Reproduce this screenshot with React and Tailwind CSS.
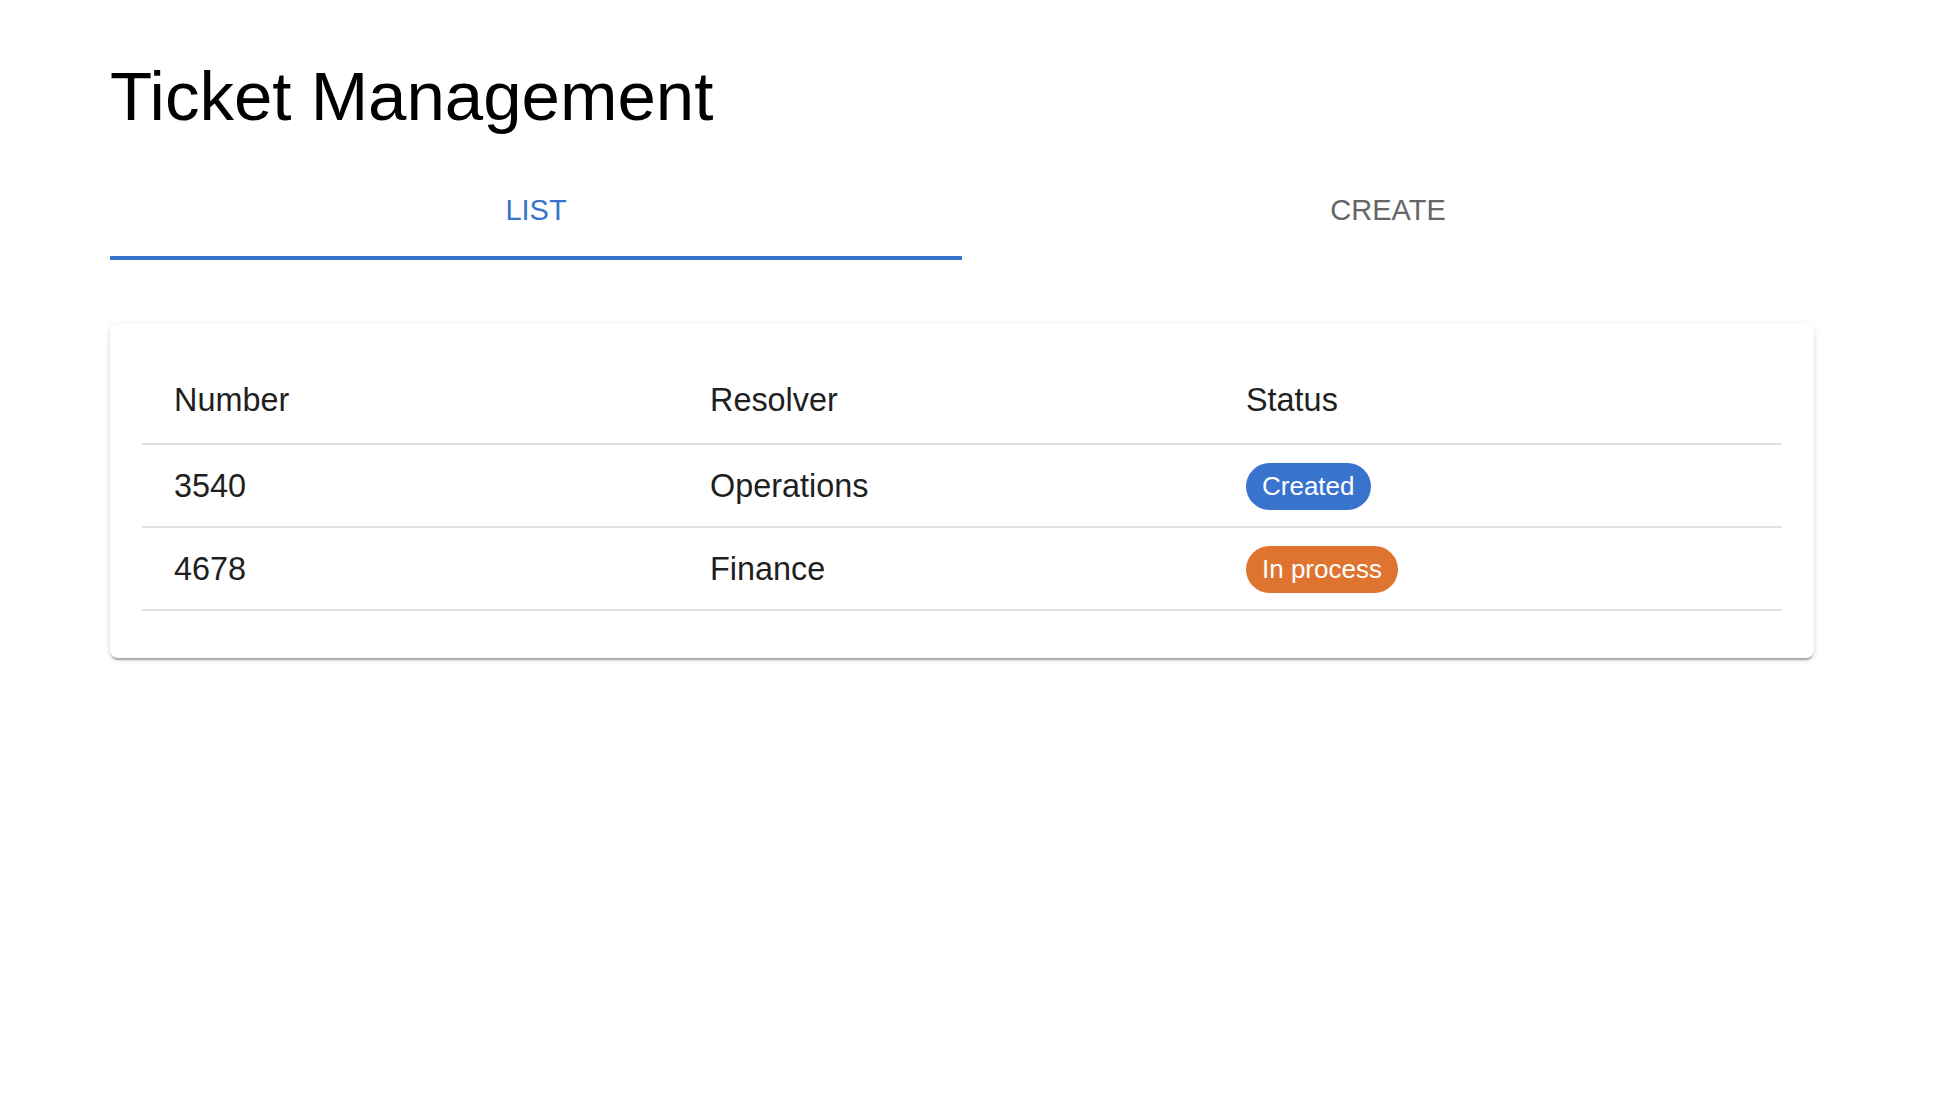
import React from "react";

const tickets = [
  { number: "3540", resolver: "Operations", status: "Created" },
  { number: "4678", resolver: "Finance", status: "In process" },
];

function StatusChip({ status }) {
  const color = status === "Created" ? "bg-[#3874cd]" : "bg-[#de7430]";
  return (
    <span className={`inline-flex h-[47px] items-center rounded-full px-4 text-[26px] leading-none text-white ${color}`}>
      {status}
    </span>
  );
}

export default function App() {
  return (
    <div className="min-h-screen bg-white font-['Liberation_Sans',Arial,sans-serif]">
      <div className="ml-[110px] w-[1704px] pt-[62px]">
        {/* Title */}
        <h1 className="h-[69px] text-[69px] leading-[69px] font-normal text-black">Ticket Management</h1>

        {/* Tabs */}
        <div className="mt-[33px] flex h-[96px]">
          <button className="flex flex-1 items-center justify-center border-b-4 border-[#3874cd] text-[29px] leading-none uppercase text-[#3874cd]">
            List
          </button>
          <button className="flex flex-1 items-center justify-center border-b-4 border-transparent text-[29px] leading-none uppercase text-[#666666]">
            Create
          </button>
        </div>

        {/* Table card */}
        <div className="mt-[64px] rounded-lg bg-white px-8 pt-[31px] pb-[47px] shadow-[0_4px_2px_-2px_rgba(0,0,0,0.2),0_2px_2px_0_rgba(0,0,0,0.14),0_2px_6px_0_rgba(0,0,0,0.12)]">
          <div className="grid h-[90px] grid-cols-[536px_536px_1fr] items-center border-b-2 border-[#e0e0e0] pt-[2px] text-[32.4px] leading-none text-[#1f1f1f]">
            <div className="pl-8">Number</div>
            <div className="pl-8">Resolver</div>
            <div className="pl-8">Status</div>
          </div>
          {tickets.map((t) => (
            <div
              key={t.number}
              className="grid h-[83px] grid-cols-[536px_536px_1fr] items-center border-b-2 border-[#e0e0e0] pt-px text-[32.4px] leading-none text-[#1f1f1f]"
            >
              <div className="pl-8">{t.number}</div>
              <div className="pl-8">{t.resolver}</div>
              <div className="pl-8">
                <StatusChip status={t.status} />
              </div>
            </div>
          ))}
        </div>
      </div>
    </div>
  );
}
